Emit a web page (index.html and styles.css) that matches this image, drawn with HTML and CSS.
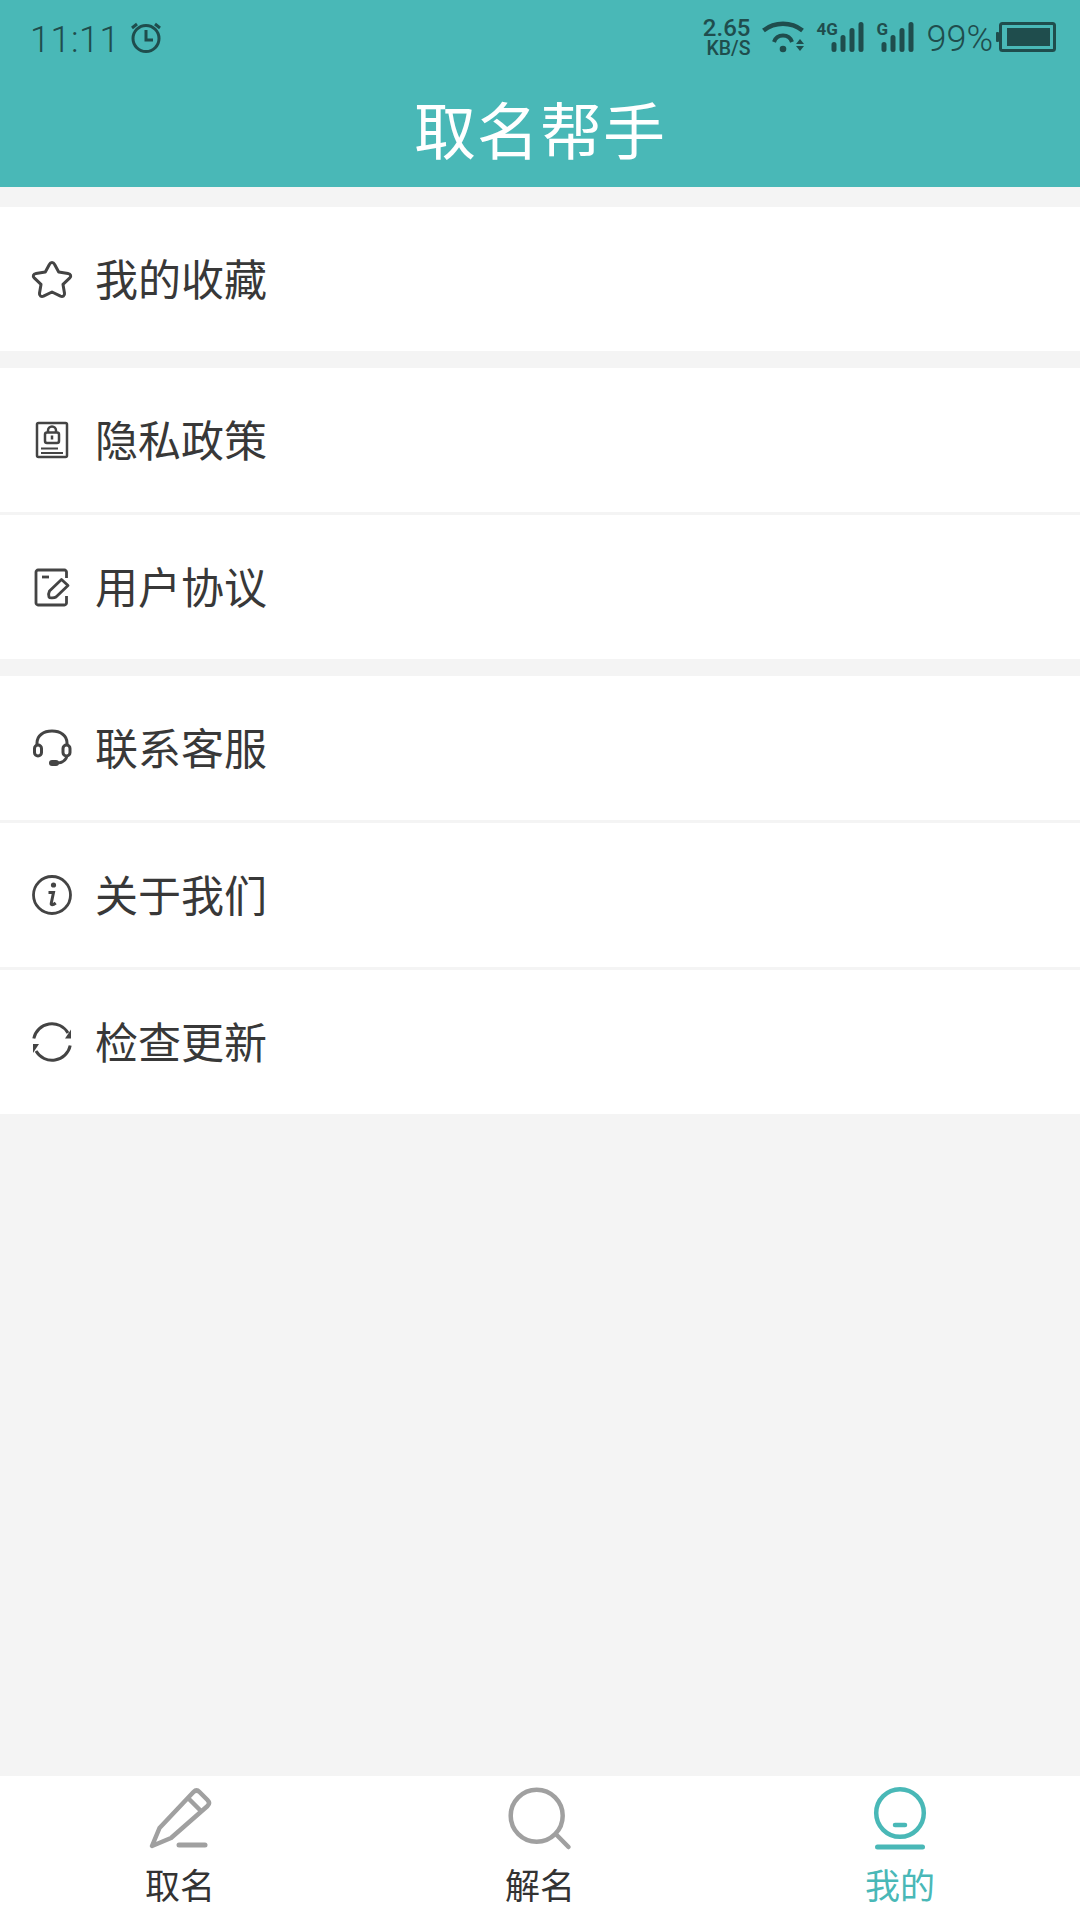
FILE: index.html
```html
<!DOCTYPE html>
<html lang="zh">
<head>
<meta charset="utf-8">
<title>取名帮手</title>
<link rel="stylesheet" href="styles.css">
</head>
<body>
<div class="app">
  <header class="header">
    <div class="status">
      <div class="status-left">
        <span class="time">11:11</span>
        <svg class="alarm" viewBox="0 0 32 32" width="32" height="32"><circle cx="16" cy="16.500" r="13" fill="none" stroke="#1f4d4d" stroke-width="3"/><path d="M16 8v10h7" fill="none" stroke="#1f4d4d" stroke-width="3"/><path d="M2 6l5-4M30 6l-5-4" fill="none" stroke="#1f4d4d" stroke-width="3"/></svg>
      </div>
      <div class="status-right">
        <div class="speed"><span class="speed-num">2.65</span><span class="speed-unit">KB/S</span></div>
        <svg class="wifi" viewBox="0 0 44 34" width="44" height="34"><path d="M1.500 10.500A32 32 0 0 1 40.500 10.500" fill="none" stroke="#1f4d4d" stroke-width="4.500"/><path d="M12 22A9.500 9.500 0 0 1 30 22" fill="none" stroke="#1f4d4d" stroke-width="4"/><circle cx="21" cy="29" r="3.300" fill="#1f4d4d"/><path d="M34 24l4-5 4 5zM34 26h8l-4 5z" fill="#1f4d4d"/></svg>
        <div class="signal">
          <span class="sig-label">4G</span>
          <svg viewBox="0 0 34 32" width="34" height="32"><path d="M3 23.500v5M12 16.500v12M21 9.500v19M30 3.500v25" stroke="#1f4d4d" stroke-width="5" stroke-linecap="round" fill="none"/></svg>
        </div>
        <div class="signal signal-g">
          <span class="sig-label">G</span>
          <svg viewBox="0 0 34 32" width="34" height="32"><path d="M3 23.500v5M12 16.500v12M21 9.500v19M30 3.500v25" stroke="#1f4d4d" stroke-width="5" stroke-linecap="round" fill="none"/></svg>
        </div>
        <span class="battery-text">99%</span>
        <svg class="battery" viewBox="0 0 60 32" width="60" height="32"><rect x="0" y="11" width="3" height="10" rx="1" fill="#1f4d4d"/><rect x="4.500" y="2.500" width="54" height="27" rx="2" fill="none" stroke="#1f4d4d" stroke-width="3"/><rect x="11" y="7" width="43" height="18" fill="#1f4d4d"/></svg>
      </div>
    </div>
    <h1 class="title">取名帮手</h1>
  </header>

  <main class="content">
    <section class="group">
      <div class="row">
        <svg class="icon" viewBox="0 0 44 44" width="44" height="44"><path d="M22 5.500c1.200 0 2 .7 2.500 1.700l4.200 7.800 9.300 1.400c2.800.4 3.500 2.800 1.800 4.500l-6.800 6.500 1.500 8.800c.4 2.500-1.800 4-4 3L22 35l-8.500 4.200c-2.200 1-4.400-.5-4-3l1.500-8.800-6.800-6.500c-1.700-1.700-1-4.100 1.800-4.500l9.300-1.400 4.200-7.800c.5-1 1.300-1.700 2.500-1.700z" fill="none" stroke="#444" stroke-width="3" stroke-linejoin="round"/></svg>
        <span class="label">我的收藏</span>
      </div>
    </section>

    <section class="group">
      <div class="row">
        <svg class="icon" viewBox="0 0 44 44" width="44" height="44"><rect x="7" y="5" width="30" height="34" rx="1.500" fill="none" stroke="#444" stroke-width="2.500"/><rect x="15" y="14.500" width="14" height="10.500" rx="2" fill="none" stroke="#444" stroke-width="2.500"/><path d="M18 14.500v-2a4 4 0 0 1 8 0v2M22 17.500v4" fill="none" stroke="#444" stroke-width="2.500"/><path d="M11 30.500h17M11 35h22" stroke="#444" stroke-width="1.800" fill="none"/></svg>
        <span class="label">隐私政策</span>
      </div>
      <div class="row">
        <svg class="icon" viewBox="0 0 44 44" width="44" height="44"><path d="M36.500 13V7c0-1-1-2-2-2H8c-1 0-2 1-2 2v31c0 1 1 2 2 2h26.500c1 0 2-1 2-2v-7" fill="none" stroke="#444" stroke-width="2.800"/><path d="M12 12h7" stroke="#444" stroke-width="2.800" fill="none"/><path d="M19.500 26l12-11.500 6.500 6L26 32c-1.500 1-6.500 1.500-7 0-.5-1.500-.3-4.500.5-6z" fill="none" stroke="#444" stroke-width="2.800" stroke-linejoin="round"/></svg>
        <span class="label">用户协议</span>
      </div>
    </section>

    <section class="group">
      <div class="row">
        <svg class="icon" viewBox="0 0 44 44" width="44" height="44"><path d="M7 19v-2C7 9.500 13.500 5 22 5s15 4.500 15 12v2" fill="none" stroke="#444" stroke-width="3"/><rect x="4.500" y="19" width="7" height="11" rx="3.500" fill="none" stroke="#444" stroke-width="3"/><rect x="33" y="19" width="7" height="11" rx="3.500" fill="none" stroke="#444" stroke-width="3"/><path d="M37 30c-1 4-5 7-11 7" fill="none" stroke="#444" stroke-width="3"/><rect x="19" y="34" width="10" height="6" rx="3" fill="#444"/></svg>
        <span class="label">联系客服</span>
      </div>
      <div class="row">
        <svg class="icon" viewBox="0 0 44 44" width="44" height="44"><circle cx="22" cy="22" r="18.500" fill="none" stroke="#444" stroke-width="2.800"/><circle cx="23.500" cy="12" r="2.600" fill="#444"/><path d="M18.500 19.500h5l-2.300 11c-.3 1.500 1.500 2 4.500-.5" fill="none" stroke="#444" stroke-width="3"/></svg>
        <span class="label">关于我们</span>
      </div>
      <div class="row">
        <svg class="icon" viewBox="0 0 44 44" width="44" height="44"><path d="M3.800 18.500A18.500 18.500 0 0 1 38 13" fill="none" stroke="#444" stroke-width="3"/><path d="M40.200 25.500A18.500 18.500 0 0 1 6 31" fill="none" stroke="#444" stroke-width="3"/><path d="M41 9.500v9h-6zM3 33v-9h6z" fill="#444"/></svg>
        <span class="label">检查更新</span>
      </div>
    </section>
  </main>

  <nav class="tabbar">
    <div class="tab">
      <svg class="tab-icon" viewBox="0 0 72 66" width="72" height="66"><path d="M8 60l7.500-18L49.500 6c2-2 4-2 6 0l8 8c2 2 2 4 0 6L27 52z" fill="none" stroke="#a0a0a0" stroke-width="4.500" stroke-linejoin="round"/><path d="M43 11l15 15" stroke="#a0a0a0" stroke-width="4.500" fill="none"/><path d="M35 59h26" stroke="#a0a0a0" stroke-width="5" stroke-linecap="round" fill="none"/></svg>
      <span class="tab-label">取名</span>
    </div>
    <div class="tab">
      <svg class="tab-icon" viewBox="0 0 72 66" width="72" height="66"><circle cx="32.700" cy="29.700" r="26" fill="none" stroke="#a0a0a0" stroke-width="4.500"/><path d="M52.700 49L64.500 61" stroke="#a0a0a0" stroke-width="4.500" stroke-linecap="round" fill="none"/></svg>
      <span class="tab-label">解名</span>
    </div>
    <div class="tab tab-active">
      <svg class="tab-icon" viewBox="0 0 72 66" width="72" height="66"><circle cx="36" cy="27" r="23.800" fill="none" stroke="#49b8b7" stroke-width="4.500"/><path d="M31 39h10" stroke="#49b8b7" stroke-width="4.500" stroke-linecap="round" fill="none"/><path d="M13.500 61h45" stroke="#49b8b7" stroke-width="5" stroke-linecap="round" fill="none"/></svg>
      <span class="tab-label">我的</span>
    </div>
  </nav>
</div>
</body>
</html>
```

FILE: styles.css
```css
* { box-sizing: border-box; margin: 0; padding: 0; }
html, body { width: 1080px; height: 1920px; overflow: hidden; }
body { background: #f4f4f4; font-family: "Noto Sans CJK SC", "Roboto", sans-serif; }
.app { width: 1080px; height: 1920px; display: flex; flex-direction: column; }

.header { height: 187px; background: #49b8b7; flex: none; display: flex; flex-direction: column; }
.status { height: 76px; padding: 0 24px 0 30px; display: flex; justify-content: space-between; align-items: flex-start; color: #1f4d4d; font-family: "Roboto", sans-serif; }
.status-left { display: flex; align-items: center; gap: 10px; padding-top: 20px; }
.time { font-size: 36px; font-weight: 300; line-height: 40px; letter-spacing: .5px; }
.alarm { margin-top: -4px; }
.status-right { display: flex; align-items: flex-start; padding-top: 18px; }
.speed { display: flex; flex-direction: column; align-items: flex-end; width: 48px; margin-right: 12px; font-weight: 500; white-space: nowrap; }
.speed-num { font-size: 24px; line-height: 20px; }
.speed-unit { font-size: 19.500px; line-height: 20px; margin-top: 1px; }
.wifi { margin-top: 2px; margin-right: 10px; flex: none; }
.signal { position: relative; width: 49px; height: 34px; margin-top: 3px; display: flex; justify-content: flex-end; margin-right: 10px; }
.signal-g { width: 40px; margin-right: 11px; }
.signal svg { flex: none; }
.sig-label { position: absolute; left: 0; top: 0; font-size: 17px; line-height: 16px; font-weight: 700; }
.signal-g .sig-label { left: 1px; }
.battery-text { font-size: 36px; font-weight: 300; line-height: 40px; margin-top: 1px; margin-right: 3px; }
.battery { margin-top: 3px; flex: none; }

.title { height: 111px; display: flex; justify-content: center; color: #fff; font-size: 62px; font-weight: 400; line-height: 104px; letter-spacing: 1px; }

.content { flex: 1; display: flex; flex-direction: column; padding-top: 20px; }
.group { display: flex; flex-direction: column; gap: 3px; margin-bottom: 17px; }
.row { height: 144px; background: #fff; display: flex; align-items: center; padding-left: 30px; }
.icon { flex: none; }
.label { margin-left: 21px; padding-bottom: 5px; font-size: 43px; line-height: 60px; color: #383838; }

.tabbar { height: 144px; background: #fff; flex: none; display: grid; grid-template-columns: repeat(3, 360px); }
.tab { display: flex; flex-direction: column; align-items: center; padding-top: 10px; }
.tab-icon { flex: none; }
.tab-label { font-size: 35px; line-height: 44px; margin-top: 10px; color: #333; }
.tab-active .tab-label { color: #49b8b7; }
```
